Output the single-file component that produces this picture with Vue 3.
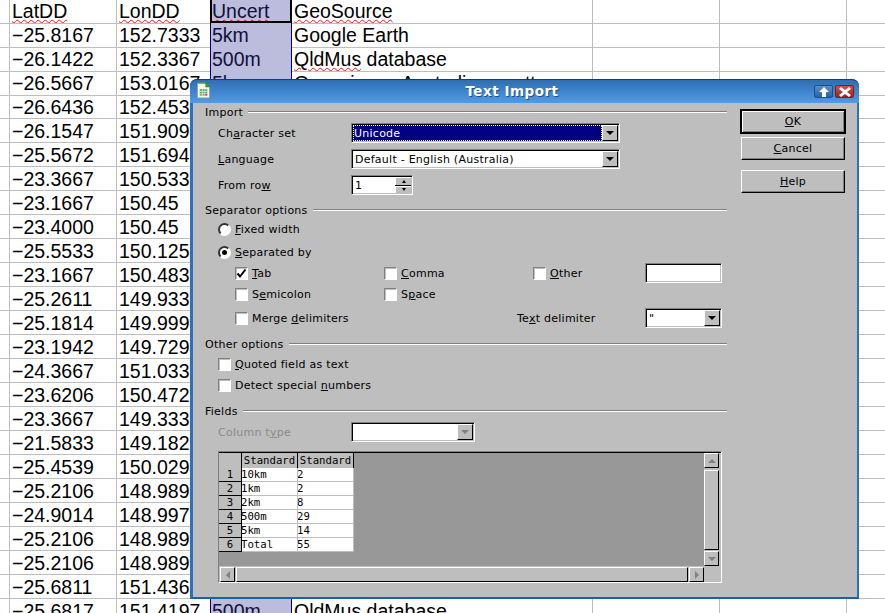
<template>
  <div class="screen">
    <div class="sheet">
      <div v-for="(r, i) in rows" :key="i" class="row" :class="{ first: i === 0 }">
        <div class="cell gutter"></div>
        <div class="cell"><span :class="{ wavy: i === 0 }">{{ r[0] }}</span></div>
        <div class="cell beforesel"><span :class="{ wavy: i === 0 }">{{ r[1] }}</span></div>
        <div class="cell sel" :class="{ cur: i === 0 }"><span :class="{ wavy: i === 0 }">{{ r[2] }}</span></div>
        <div class="cell">
          <span v-if="r[3] === 'QldMus database'"><span class="wavy">QldMus</span> database</span>
          <span v-else :class="{ wavy: i === 0 }">{{ r[3] }}</span>
        </div>
        <div class="cell"></div>
        <div class="cell"></div>
        <div class="cell last"></div>
      </div>
    </div>

    <div class="dialog">
      <div class="titlebar">
        <svg class="appicon" width="13" height="17" viewBox="0 0 14 17">
          <path d="M.5.5H9L13.5 5V16.5H.5Z" fill="#f4f8f0" stroke="#8aa888"/>
          <path d="M1 0H10L14 4V5H9V1H1Z" fill="#2f9a32"/>
          <rect x="3" y="7" width="8" height="7" fill="#5aa85c"/>
          <path d="M3 9.5H11M3 12H11M5.7 7V14M8.4 7V14" stroke="#e8f2e8" stroke-width=".8"/>
          <rect x="9" y="12" width="2" height="2" fill="#c05a8a"/>
        </svg>
        <span class="title">Text Import</span>
        <div class="winbtns">
          <span class="winbtn up">
            <svg width="12" height="10" viewBox="0 0 12 10"><path d="M6 0 11 5H8V10H4V5H1Z" fill="#fff"/></svg>
          </span>
          <span class="winbtn close">
            <svg width="12" height="10" viewBox="0 0 12 10"><path d="M2 0 6 3 10 0 12 2 8 5 12 8 10 10 6 7 2 10 0 8 4 5 0 2Z" fill="#fff"/></svg>
          </span>
        </div>
      </div>

      <div class="body">
        <div class="main">
          <div class="legend l-import"><span>Import</span><i></i></div>
          <div class="line r-charset">
            <label>Ch<u>a</u>racter set</label>
            <div class="combo wide focus"><span class="val"><b>Unicode</b></span><span class="drop"><em></em></span></div>
          </div>
          <div class="line r-lang">
            <label><u>L</u>anguage</label>
            <div class="combo wide"><span class="val">Default - English (Australia)</span><span class="drop"><em></em></span></div>
          </div>
          <div class="line r-row">
            <label>From ro<u>w</u></label>
            <div class="spin">
              <span class="val">1</span>
              <span class="spinbtns"><span><em class="upa"></em></span><span><em></em></span></span>
            </div>
          </div>

          <div class="legend l-sep"><span>Separator options</span><i></i></div>
          <div class="opt r-fixed"><span class="radio"></span><span><u>F</u>ixed width</span></div>
          <div class="opt r-sepby"><span class="radio on"></span><span><u>S</u>eparated by</span></div>

          <div class="checks r-tab">
            <div class="opt"><span class="check">
              <svg width="11" height="11" viewBox="0 0 11 11"><path d="M1.5 5.5 4 8.5 9.5 1.5" fill="none" stroke="#000" stroke-width="2"/></svg>
            </span><span><u>T</u>ab</span></div>
            <div class="opt"><span class="check"></span><span><u>C</u>omma</span></div>
            <div class="opt"><span class="check"></span><span><u>O</u>ther</span></div>
            <div class="textbox"></div>
          </div>
          <div class="checks r-semi">
            <div class="opt"><span class="check"></span><span>S<u>e</u>micolon</span></div>
            <div class="opt"><span class="check"></span><span>S<u>p</u>ace</span></div>
          </div>
          <div class="checks2 r-merge">
            <div class="opt"><span class="check"></span><span>Merge <u>d</u>elimiters</span></div>
            <label>Te<u>x</u>t delimiter</label>
            <div class="combo small"><span class="val">"</span><span class="drop"><em></em></span></div>
          </div>

          <div class="legend l-other"><span>Other options</span><i></i></div>
          <div class="opt r-quoted"><span class="check"></span><span><u>Q</u>uoted field as text</span></div>
          <div class="opt r-detect"><span class="check"></span><span>Detect special <u>n</u>umbers</span></div>

          <div class="legend l-fields"><span>Fields</span><i></i></div>
          <div class="line r-coltype">
            <label class="off">Column t<u>y</u>pe</label>
            <div class="combo mid"><span class="val"></span><span class="drop dis"><em></em></span></div>
          </div>

          <div class="gridbox">
            <div class="gridinner">
              <div class="gridtop">
                <div class="table">
                  <div class="thead">
                    <span class="corner"></span><span class="th">Standard</span><span class="th">Standard</span>
                  </div>
                  <div v-for="(t, i) in preview" :key="i" class="tr">
                    <span class="rh">{{ i + 1 }}</span><span class="td">{{ t[0] }}</span><span class="td">{{ t[1] }}</span>
                  </div>
                </div>
                <div class="vscroll">
                  <span class="sbtn"><em class="dis-up"></em></span>
                  <span class="vthumb"></span>
                  <span class="sbtn"><em class="dis-down"></em></span>
                </div>
              </div>
              <div class="hscroll">
                <span class="sbtn"><em class="dis-left"></em></span>
                <span class="hthumb"></span>
                <span class="sbtn"><em class="dis-right"></em></span>
              </div>
            </div>
          </div>
        </div>

        <div class="side">
          <div class="btn default"><span><u>O</u>K</span></div>
          <div class="btn"><span><u>C</u>ancel</span></div>
          <div class="btn help"><span><u>H</u>elp</span></div>
        </div>
      </div>
    </div>
  </div>
</template>

<script setup>
const coords = [
  ['−25.8167', '152.7333', '5km', 'Google Earth'],
  ['−26.1422', '152.3367', '500m', 'QldMus database'],
  ['−26.5667', '153.0167', '5km', 'Geoscience Australia gazetteer'],
  ['−26.6436', '152.4531'],
  ['−26.1547', '151.9097'],
  ['−25.5672', '151.6947'],
  ['−23.3667', '150.5333'],
  ['−23.1667', '150.45'],
  ['−23.4000', '150.45'],
  ['−25.5533', '150.1250'],
  ['−23.1667', '150.4833'],
  ['−25.2611', '149.9333'],
  ['−25.1814', '149.9997'],
  ['−23.1942', '149.7294'],
  ['−24.3667', '151.0333'],
  ['−23.6206', '150.4725'],
  ['−23.3667', '149.3333'],
  ['−21.5833', '149.1825'],
  ['−25.4539', '150.0294'],
  ['−25.2106', '148.9892'],
  ['−24.9014', '148.9975'],
  ['−25.2106', '148.9892'],
  ['−25.2106', '148.9892'],
  ['−25.6811', '151.4367'],
  ['−25.6817', '151.4197', '500m', 'QldMus database'],
]
const rows = [['LatDD', 'LonDD', 'Uncert', 'GeoSource'], ...coords]

const preview = [
  ['10km', '2'],
  ['1km', '2'],
  ['2km', '8'],
  ['500m', '29'],
  ['5km', '14'],
  ['Total', '55'],
]
</script>

<style>
html, body { margin: 0; overflow: hidden; background: #fff; }
</style>

<style scoped>
.screen { position: relative; width: 885px; height: 613px; overflow: hidden; background: #fff; font-family: "DejaVu Sans", sans-serif; }

/* spreadsheet behind the dialog */
.sheet { font-family: "Liberation Sans", Arial, sans-serif; font-size: 19.5px; color: #000; }
.row { display: grid; grid-template-columns: 10px 107px 94px 81px 301px 127px 127px 38px; height: 24px; }
.row.first { height: 23px; }
.cell { box-sizing: border-box; border-right: 1px solid #bebebe; border-bottom: 1px solid #bebebe; padding: 1px 0 0 2px; line-height: 23px; white-space: nowrap; overflow: hidden; }
.row.first .cell { padding-top: 0; line-height: 23px; }
.cell.last { border-right: 0; }
.beforesel { border-right-color: #000080; }
.sel { position: relative; background: #bcbcdc; border-right-color: #000080; border-bottom-color: #9a9ab8; color: #10103c; overflow: visible; padding-left: 1px; }
.cur::after { content: ""; position: absolute; left: -1px; right: -1px; top: -3px; bottom: -1px; border: 2px solid #000; border-bottom-width: 3px; box-sizing: border-box; }
.wavy { text-decoration: underline wavy #e81818 1px; text-underline-offset: 1px; }

/* dialog window */
.dialog { position: absolute; left: 190px; top: 79px; width: 669px; height: 520px; box-sizing: border-box; border: 2px solid #2f6fbb; border-left-width: 3px; border-top: 0; border-bottom-color: #1f5fa8; border-radius: 7px 7px 0 0; background: #bebebe; color: #000; font-size: 11px; letter-spacing: .25px; }
.titlebar { position: relative; margin: 0 -2px 0 -3px; height: 24px; box-sizing: border-box; border-top: 1px solid #123f70; border-radius: 7px 7px 0 0; background: linear-gradient(#2f6eb2, #4f9be8); display: flex; align-items: center; justify-content: center; }
.appicon { position: absolute; left: 7px; top: 2px; }
.title { color: #fff; font-weight: bold; font-size: 13.5px; letter-spacing: .5px; text-shadow: 1px 1px 0 #1f4f86; margin: -2px 25px 0 0; }
.winbtns { position: absolute; right: 5px; top: 5px; display: flex; gap: 2px; }
.winbtn { width: 19px; height: 13px; box-sizing: border-box; border-radius: 2px; display: flex; align-items: center; justify-content: center; border: 1px solid #204f80; }
.winbtn.up { background: linear-gradient(#5a8fc8, #2a62a0); }
.winbtn.close { background: linear-gradient(#d05050, #a02020); border-color: #7a2020; }

.body { display: flex; height: 494px; }
.main { width: 522px; margin-left: 12px; flex: none; }
.side { width: 104px; margin-left: 14px; padding-top: 7px; flex: none; }

.legend { display: flex; align-items: center; height: 14px; }
.legend i { flex: 1; margin-left: 5px; height: 2px; box-sizing: border-box; border-top: 1px solid #808080; border-bottom: 1px solid #fff; }
.l-import { margin-top: 2px; }
.l-sep { margin-top: 8px; }
.l-other { margin-top: 12px; }
.l-fields { margin-top: 12px; }

.line { display: flex; align-items: center; padding-left: 13px; }
.line label { width: 133px; flex: none; }
.line label.off { color: #8a8a8a; }
.r-charset { margin-top: 4px; }
.r-lang { margin-top: 6px; }
.r-row { margin-top: 6px; }
.r-coltype { margin-top: 4px; }

.combo, .spin, .textbox { box-sizing: border-box; height: 20px; border: 1px solid; border-color: #808080 #fff #fff #808080; background: #fff; display: flex; position: relative; box-shadow: inset 1px 1px 0 #000, inset -1px -1px 0 #bebebe; }
.combo.wide { width: 269px; }
.combo.mid { width: 124px; }
.combo.small { width: 77px; }
.val { flex: 1; padding: 2px 0 0 3px; line-height: 16px; white-space: nowrap; overflow: hidden; }
.val b { font-weight: normal; display: block; height: 16px; line-height: 17px; padding-left: 1px; background: #000080; color: #fff; outline: 1px dotted #fff; outline-offset: -1px; }
.focus .val { padding: 1px 0 0 1px; }
.drop { width: 16px; margin: 1px 1px 1px 0; box-sizing: border-box; background: #bebebe; border: 1px solid; border-color: #fff #000 #000 #fff; display: flex; align-items: center; justify-content: center; }
.drop em { width: 0; height: 0; border-left: 4px solid transparent; border-right: 4px solid transparent; border-top: 4px solid #000; }
.drop.dis em { border-top-color: #808080; }

.spin { width: 62px; }
.spin .val { padding-left: 3px; }
.spinbtns { width: 16px; margin: 1px 1px 1px 0; display: flex; flex-direction: column; background: #000; gap: 1px; }
.spinbtns span { flex: 1; background: #bebebe; border-left: 1px solid #fff; border-top: 1px solid #fff; display: flex; align-items: center; justify-content: center; }
.spinbtns em { width: 0; height: 0; border-left: 2.5px solid transparent; border-right: 2.5px solid transparent; border-top: 3px solid #000; }
.spinbtns em.upa { border-top: 0; border-bottom: 3px solid #000; }

.opt { display: flex; align-items: center; height: 14px; white-space: nowrap; }
.radio { width: 13px; height: 13px; box-sizing: border-box; margin-right: 4px; border-radius: 50%; background: #fff; border: 2px solid; border-color: #333 #fff #fff #333; position: relative; box-shadow: 0 0 0 1px #bebebe; }
.radio.on::after { content: ""; position: absolute; left: 2px; top: 2px; width: 5px; height: 5px; border-radius: 50%; background: #000; }
.check { width: 13px; height: 13px; box-sizing: border-box; margin-right: 4px; flex: none; background: #fff; border: 1px solid; border-color: #808080 #fff #fff #808080; box-shadow: inset 1px 1px 0 #bebebe; display: flex; align-items: center; justify-content: center; }

.r-fixed { margin: 5px 0 0 13px; }
.r-sepby { margin: 9px 0 0 13px; }
.checks { display: grid; grid-template-columns: 149px 149px 112px 77px; align-items: center; margin-left: 30px; height: 14px; }
.r-tab { margin-top: 4px; }
.r-semi { margin-top: 7px; }
.r-semi { margin-top: 10px; }
.r-merge { margin: 10px 0 0 30px; display: flex; align-items: center; height: 14px; }
.r-merge .opt { width: 282px; }
.r-merge label { width: 128px; }
.textbox { width: 77px; height: 20px; }
.r-quoted { margin: 6px 0 0 13px; }
.r-detect { margin: 7px 0 0 13px; }

/* preview table */
.gridbox { margin: 9px 0 0 13px; width: 504px; height: 132px; box-sizing: border-box; border: 1px solid; border-color: #808080 #fff #fff #808080; }
.gridinner { height: 130px; box-shadow: inset 1px 1px 0 #000; padding: 1px 0 0 0; box-sizing: border-box; }
.gridtop { display: flex; height: 113px; }
.table { width: 485px; background: #989898; font-family: "DejaVu Sans Mono", monospace; font-size: 10.67px; letter-spacing: 0; overflow: hidden; }
.thead, .tr { display: grid; grid-template-columns: 23px 56px 56px; height: 14px; line-height: 13px; }
.thead { height: 15px; }
.thead span { box-sizing: border-box; background: #bebebe; border-right: 1px solid #000; border-bottom: 1px solid #000; text-align: center; line-height: 15px; }
.rh { box-sizing: border-box; background: #bebebe; border-right: 1px solid #000; border-bottom: 1px solid #000; text-align: center; }
.td { box-sizing: border-box; background: #fff; border-right: 1px solid #bebebe; border-bottom: 1px solid #bebebe; position: relative; overflow: hidden; white-space: nowrap; text-indent: -1px; }
.vscroll { width: 16px; display: flex; flex-direction: column; background: #bebebe; }
.sbtn { flex: none; width: 15px; height: 15px; box-sizing: border-box; background: #bebebe; border: 1px solid; border-color: #fff #000 #000 #fff; display: flex; align-items: center; justify-content: center; }
.sbtn em { width: 0; height: 0; }
.dis-up { border-left: 4px solid transparent; border-right: 4px solid transparent; border-bottom: 4px solid #808080; }
.dis-down { border-left: 4px solid transparent; border-right: 4px solid transparent; border-top: 4px solid #808080; }
.dis-left { border-top: 4px solid transparent; border-bottom: 4px solid transparent; border-right: 4px solid #808080; }
.dis-right { border-top: 4px solid transparent; border-bottom: 4px solid transparent; border-left: 4px solid #808080; }
.vthumb { flex: 1; box-sizing: border-box; margin: 2px 0 1px; width: 15px; background: #bebebe; border: 1px solid; border-color: #fff #000 #000 #fff; }
.hscroll { display: flex; height: 16px; width: 485px; background: #bebebe; align-items: flex-start; padding: 1px 0 0 1px; box-sizing: border-box; }
.hthumb { flex: 1; height: 15px; box-sizing: border-box; margin: 0 1px; background: #bebebe; border: 1px solid; border-color: #fff #000 #000 #fff; }

/* right hand buttons */
.btn { box-sizing: border-box; width: 104px; height: 23px; margin-bottom: 4px; border: 1px solid; border-color: #fff #000 #000 #fff; display: flex; align-items: center; justify-content: center; box-shadow: inset -1px -1px 0 #808080; }
.btn.default { outline: 1px solid #000; outline-offset: 0; border-color: #000 #000 #000 #000; box-shadow: inset 1px 1px 0 #fff, inset -1px -1px 0 #808080; }
.btn.help { margin-top: 10px; }
</style>
